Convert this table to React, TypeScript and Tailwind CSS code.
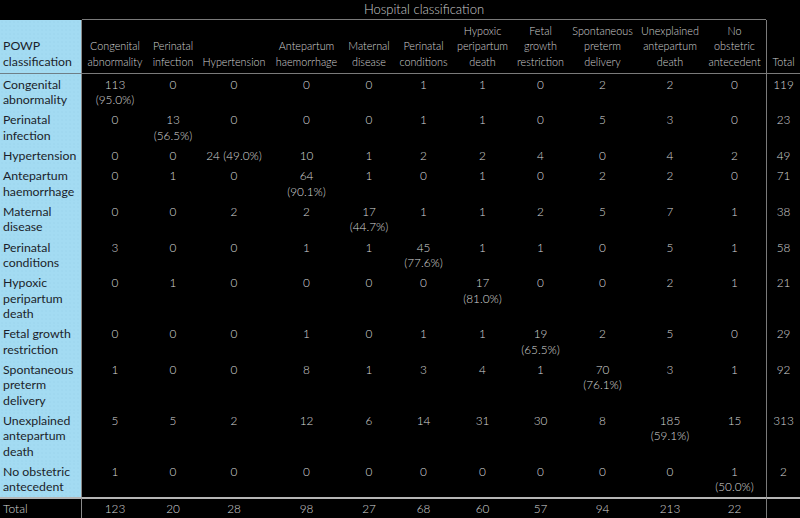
type Cell = string | [string, string];

type Row = {
  label: string[];
  cells: Cell[];
  total: string;
};

const headers: string[][] = [
  ["Congenital", "abnormality"],
  ["Perinatal", "infection"],
  ["Hypertension"],
  ["Antepartum", "haemorrhage"],
  ["Maternal", "disease"],
  ["Perinatal", "conditions"],
  ["Hypoxic", "peripartum", "death"],
  ["Fetal", "growth", "restriction"],
  ["Spontaneous", "preterm", "delivery"],
  ["Unexplained", "antepartum", "death"],
  ["No", "obstetric", "antecedent"],
];

const rows: Row[] = [
  {
    label: ["Congenital", "abnormality"],
    cells: [["113", "(95.0%)"], "0", "0", "0", "0", "1", "1", "0", "2", "2", "0"],
    total: "119",
  },
  {
    label: ["Perinatal", "infection"],
    cells: ["0", ["13", "(56.5%)"], "0", "0", "0", "1", "1", "0", "5", "3", "0"],
    total: "23",
  },
  {
    label: ["Hypertension"],
    cells: ["0", "0", "24 (49.0%)", "10", "1", "2", "2", "4", "0", "4", "2"],
    total: "49",
  },
  {
    label: ["Antepartum", "haemorrhage"],
    cells: ["0", "1", "0", ["64", "(90.1%)"], "1", "0", "1", "0", "2", "2", "0"],
    total: "71",
  },
  {
    label: ["Maternal", "disease"],
    cells: ["0", "0", "2", "2", ["17", "(44.7%)"], "1", "1", "2", "5", "7", "1"],
    total: "38",
  },
  {
    label: ["Perinatal", "conditions"],
    cells: ["3", "0", "0", "1", "1", ["45", "(77.6%)"], "1", "1", "0", "5", "1"],
    total: "58",
  },
  {
    label: ["Hypoxic", "peripartum", "death"],
    cells: ["0", "1", "0", "0", "0", "0", ["17", "(81.0%)"], "0", "0", "2", "1"],
    total: "21",
  },
  {
    label: ["Fetal growth", "restriction"],
    cells: ["0", "0", "0", "1", "0", "1", "1", ["19", "(65.5%)"], "2", "5", "0"],
    total: "29",
  },
  {
    label: ["Spontaneous", "preterm", "delivery"],
    cells: ["1", "0", "0", "8", "1", "3", "4", "1", ["70", "(76.1%)"], "3", "1"],
    total: "92",
  },
  {
    label: ["Unexplained", "antepartum", "death"],
    cells: ["5", "5", "2", "12", "6", "14", "31", "30", "8", ["185", "(59.1%)"], "15"],
    total: "313",
  },
  {
    label: ["No obstetric", "antecedent"],
    cells: ["1", "0", "0", "0", "0", "0", "0", "0", "0", "0", ["1", "(50.0%)"]],
    total: "2",
  },
];

const totals = ["123", "20", "28", "98", "27", "68", "60", "57", "94", "213", "22"];

// blue first column, with the faint dot texture of the original
const blue =
  "bg-[#a3dbf2] bg-[radial-gradient(circle,#97d2ea_0.5px,transparent_0.8px)] bg-size-[4px_4px]";

function Lines({ lines }: { lines: string[] }) {
  return (
    <>
      {lines.map((l, i) => (
        <div key={i} className="whitespace-nowrap">
          {l}
        </div>
      ))}
    </>
  );
}

export default function App() {
  return (
    <div className="w-[800px] h-[518px] overflow-hidden bg-black font-['Lato','Noto_Sans',sans-serif]">
      <div className="grid grid-cols-[82px_66px_50px_72px_73px_52px_57px_61px_55px_69px_66px_63px_34px]">
        {/* title row */}
        <div className="h-[20px]" />
        <div className="col-span-11 h-[20px] border-b border-[#7a7a7a] text-center text-[13px] leading-[18px] text-[#cfcfcf] font-light">
          Hospital classification
        </div>
        <div className="h-[20px]" />

        {/* column headers */}
        <div
          className={`${blue} h-[54px] border-r border-b border-r-[#8a8a8a] border-b-[#6f7f88] flex flex-col justify-end pl-[3px] pb-[4px] text-[12.3px] leading-[15.35px] text-[#1c1f2b]`}
        >
          <Lines lines={["POWP", "classification"]} />
        </div>
        {headers.map((h, i) => (
          <div
            key={i}
            className="h-[54px] border-b border-[#7a7a7a] flex flex-col justify-end items-center pb-[4px] text-[10.8px] leading-[15.35px] text-[#d2d2d2] font-light"
          >
            <Lines lines={h} />
          </div>
        ))}
        <div className="h-[54px] border-b border-l border-[#7a7a7a] flex flex-col justify-end items-center pb-[4px] text-[10.8px] leading-[15.35px] text-[#d2d2d2] font-light">
          Total
        </div>

        {/* body */}
        {rows.map((r, ri) => (
          <Row key={ri} row={r} />
        ))}

        {/* totals */}
        <div className="h-[21px] border-t-2 border-r border-t-[#b5b5b5] border-r-[#8a8a8a] pl-[3px] text-[12px] leading-[19px] text-[#d8d8d8] font-light">
          Total
        </div>
        {totals.map((t, i) => (
          <div
            key={i}
            className="h-[21px] border-t-2 border-[#b5b5b5] text-center text-[11.8px] leading-[19px] text-[#d8d8d8] font-light"
          >
            {t}
          </div>
        ))}
        <div className="h-[21px] border-t-2 border-l border-t-[#b5b5b5] border-l-[#7a7a7a]" />
      </div>
    </div>
  );
}

function Row({ row }: { row: Row }) {
  return (
    <>
      <div
        className={`${blue} border-r border-[#8a8a8a] pl-[3px] py-[2.5px] text-[12.3px] leading-[15.35px] text-[#1c1f2b]`}
      >
        <Lines lines={row.label} />
      </div>
      {row.cells.map((c, i) => (
        <div
          key={i}
          className="py-[2.5px] text-center text-[11.8px] leading-[15.35px] text-[#d8d8d8] font-light"
        >
          {typeof c === "string" ? <div className="whitespace-nowrap">{c}</div> : <Lines lines={c} />}
        </div>
      ))}
      <div className="border-l border-[#7a7a7a] py-[2.5px] text-center text-[11.8px] leading-[15.35px] text-[#d8d8d8] font-light">
        {row.total}
      </div>
    </>
  );
}
